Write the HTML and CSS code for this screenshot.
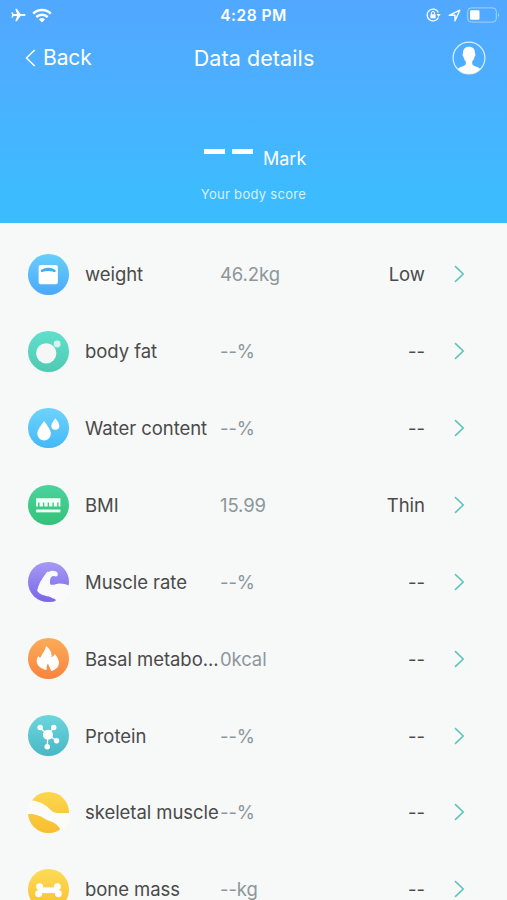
FILE: index.html
```html
<!DOCTYPE html>
<html lang="en">
<head>
    <meta charset="UTF-8">
    <meta name="viewport" content="width=device-width, initial-scale=1.0">
    <title>Data details</title>
    <link rel="stylesheet" href="styles.css">
</head>
<body>
    <header class="header">
        <div class="status-bar">
            <div class="status-left">
                <svg width="15" height="14" viewBox="0 0 15 14"><path d="M14.6 7c0-.7-.8-1-1.800-1H9.500L5.800.8H4.300L6 6H2.700L1.400 4.300H.4L1.100 7 .4 9.700h1L2.700 8H6L4.300 13.200h1.500L9.500 8h3.300c1 0 1.800-.3 1.800-1z" fill="#fff"/></svg>
                <svg width="20" height="15" viewBox="0 0 20 15" fill="none" stroke="#fff" stroke-width="2.500"><path d="M1.200 5.600a12.500 12.500 0 0 1 17.600 0M4.300 9a8.200 8.200 0 0 1 11.400 0"/><path d="M10 14.400l-3-3a4.300 4.300 0 0 1 6 0z" fill="#fff" stroke="none"/></svg>
            </div>
            <span class="time">4:28 PM</span>
            <div class="status-right">
                <svg width="15" height="14" viewBox="0 0 15 14"><path d="M12.300 4.400A5.900 5.900 0 1 0 12.400 9.400" fill="none" stroke="#fff" stroke-width="1.300"/><path d="M10.600 6h4l-2 3z" fill="#fff"/><rect x="4.400" y="6.200" width="5.200" height="4" rx=".5" fill="#fff"/><path d="M5.500 6.500V5a1.500 1.500 0 0 1 3 0v1.500" fill="none" stroke="#fff"/></svg>
                <svg width="13" height="13" viewBox="0 0 13 13"><path d="M1.200 6.300L11.800 1.200 7 11.800V6.300z" fill="none" stroke="#fff" stroke-width="1.400" stroke-linejoin="round"/></svg>
                <svg class="battery" width="33" height="16" viewBox="0 0 33 16"><rect x=".7" y=".9" width="28.600" height="14.200" rx="3.500" fill="none" stroke="#b9e0ff" stroke-opacity=".75"/><rect x="3" y="3.200" width="9.500" height="9.600" rx="1.200" fill="#fff"/><path d="M31 5.500q1.800 2.500 0 5z" fill="#b9e0ff"/></svg>
            </div>
        </div>
        <div class="nav-bar">
            <div class="back">
                <svg width="11" height="18" viewBox="0 0 11 18"><path d="M9.700 1L1.500 9l8.200 8" fill="none" stroke="#fff" stroke-width="1.500"/></svg>
                <span>Back</span>
            </div>
            <h1 class="title">Data details</h1>
            <svg class="avatar" width="34" height="34" viewBox="0 0 34 34"><circle cx="17" cy="17" r="15.900" fill="none" stroke="#d8f0ff" stroke-width="1.200"/><path d="M17 5.800c-4 0-6.200 2.600-6 6.600-.8.400-.5 2.700.5 3.400.3 2 1.200 3.500 2.300 4.600.2 3-.3 3.800-2.500 4.700-2.300.9-4.300 1.700-5.400 3A15.800 15.800 0 0 0 17 32.800 15.800 15.800 0 0 0 28.100 28.100c-1.100-1.300-3.100-2.100-5.400-3-2.200-.9-2.700-1.700-2.500-4.700 1.100-1.100 2-2.600 2.300-4.600 1-.7 1.300-3 .5-3.400.2-4-2-6.600-6-6.600z" fill="#fff"/></svg>
        </div>
        <div class="score">
            <span class="dash"></span>
            <span class="dash"></span>
            <span class="mark">Mark</span>
        </div>
        <p class="caption">Your body score</p>
    </header>

    <main class="list">
        <div class="row">
            <svg class="icon weight" viewBox="0 0 40 40"><rect x="10.500" y="10.800" width="19" height="19" rx="2" fill="#fff"/><path d="M12.800 17.600v-1.700q7.200-4.600 14.400 0v1.700q-1.500 1-2.600-.2-4.600-1.400-9.200 0-1.100 1.200-2.600.2z" fill="#4fa9e8"/></svg>
            <span class="name">weight</span>
            <span class="value">46.2kg</span>
            <span class="level">Low</span>
            <svg class="arrow" viewBox="0 0 11 18"><path d="M1 1.200L9.200 9 1 16.800"/></svg>
        </div>
        <div class="row">
            <svg class="icon fat" viewBox="0 0 40 40"><circle cx="18" cy="22" r="10" fill="#f5f7f7"/><circle cx="28.800" cy="12.800" r="3.400" fill="#d3f5ed"/></svg>
            <span class="name">body fat</span>
            <span class="value">--%</span>
            <span class="level">--</span>
            <svg class="arrow" viewBox="0 0 11 18"><path d="M1 1.200L9.200 9 1 16.800"/></svg>
        </div>
        <div class="row">
            <svg class="icon water" viewBox="0 0 40 40" fill="#fff"><path d="M15.900 12.800c3 4.500 6.700 8.500 6.700 12.700a6.700 6.700 0 0 1-13.400 0c0-4.200 3.700-8.200 6.700-12.700z"/><path d="M27 10.200c1.800 2.800 4 4.900 4 7.400a4 4 0 0 1-8 0c0-2.500 2.200-4.600 4-7.400z"/></svg>
            <span class="name">Water content</span>
            <span class="value">--%</span>
            <span class="level">--</span>
            <svg class="arrow" viewBox="0 0 11 18"><path d="M1 1.200L9.200 9 1 16.800"/></svg>
        </div>
        <div class="row">
            <svg class="icon bmi" viewBox="0 0 40 40" fill="#f4fff8"><path d="M8 13.200h24v8h-1.800v-4h-1.400v4h-3.300v-4h-1.400v4h-3.300v-4h-1.400v4h-3.300v-4h-1.400v4h-3.300v-4H9.800v4H8z"/><rect x="8" y="24.200" width="24" height="2.800"/></svg>
            <span class="name">BMI</span>
            <span class="value">15.99</span>
            <span class="level">Thin</span>
            <svg class="arrow" viewBox="0 0 11 18"><path d="M1 1.200L9.200 9 1 16.800"/></svg>
        </div>
        <div class="row">
            <svg class="icon muscle" viewBox="0 0 40 40" fill="#fafafc"><path d="M20.500 9.800c1.700-1.300 5-1.500 7.300-.3 1.500.8 2 2.700 1.300 4-.8 1.200-2.200.7-3.600.4-1.300-.1-2.100.5-2.900 1.500-1 1.700-1.200 4.700-.6 6.800 1.700.6 3.600.4 5.200-.3 3.500-1.400 8.500-.8 13.800 1.600v6.500c-2 5-7 9.500-14 10.500.5-1.800.4-2.900-.2-4-2.500-.3-4.300-1.800-6.300-2.400-4.500-1-9-2-11.500-5.800 1-5.700 4.500-11.800 8.500-16.800.8-1.500 2-2.100 3-1.700z"/></svg>
            <span class="name">Muscle rate</span>
            <span class="value">--%</span>
            <span class="level">--</span>
            <svg class="arrow" viewBox="0 0 11 18"><path d="M1 1.200L9.200 9 1 16.800"/></svg>
        </div>
        <div class="row">
            <svg class="icon basal" viewBox="0 0 40 40"><path d="M18 8c3.500 3 5.800 6.300 5.300 11 1.300-.6 2.500-1.700 3.200-3.300 5.500 6.500 6.500 13.500-3.500 17l-3.300-7.500c-1.200 2-1.700 4-1.200 6.300-8.500-1.500-12.300-7.500-8.400-13.800.6 1 1.100 1.500 2.200 1.600C14.400 15.300 16.800 12.500 18 8z" fill="#fff"/></svg>
            <span class="name">Basal metabo...</span>
            <span class="value">0kcal</span>
            <span class="level">--</span>
            <svg class="arrow" viewBox="0 0 11 18"><path d="M1 1.200L9.200 9 1 16.800"/></svg>
        </div>
        <div class="row">
            <svg class="icon protein" viewBox="0 0 40 40" fill="#fff"><path d="M19.500 19.500L12 12.500M19.500 19.500l5.800-7M19.500 19.500l-.5 12M19.500 19.500l9 6" stroke="#fff" stroke-width="1.300"/><circle cx="19.700" cy="19.500" r="5"/><circle cx="12" cy="12.300" r="2.700"/><circle cx="25.400" cy="12.300" r="2.700"/><circle cx="28.200" cy="25.500" r="2.700"/><circle cx="19" cy="31.400" r="2.700"/></svg>
            <span class="name">Protein</span>
            <span class="value">--%</span>
            <span class="level">--</span>
            <svg class="arrow" viewBox="0 0 11 18"><path d="M1 1.200L9.200 9 1 16.800"/></svg>
        </div>
        <div class="row">
            <svg class="icon skeletal" viewBox="0 0 40 40" fill="#fbfbf9"><path d="M3.500 8.200C12 9.500 18 13 22.500 17.700c4.500 4.500 10 2.500 18.500 3.300v8c-2 4-5 7-8.800 8.700-1.500-3.800-4.500-6.200-8-8-6.500-1.700-9-4.800-13.700-6.200-3.500-1.500-7-2-11.500-1.500C-1.500 16 .5 11.500 3.500 8.200z"/></svg>
            <span class="name">skeletal muscle</span>
            <span class="value">--%</span>
            <span class="level">--</span>
            <svg class="arrow" viewBox="0 0 11 18"><path d="M1 1.200L9.200 9 1 16.800"/></svg>
        </div>
        <div class="row">
            <svg class="icon bone" viewBox="0 0 40 40" fill="#fff"><rect x="10" y="18.200" width="20" height="5.600"/><circle cx="11.500" cy="17.500" r="3.400"/><circle cx="10.500" cy="24.500" r="3.400"/><circle cx="29" cy="17.500" r="3.400"/><circle cx="30" cy="24.500" r="3.400"/></svg>
            <span class="name">bone mass</span>
            <span class="value">--kg</span>
            <span class="level">--</span>
            <svg class="arrow" viewBox="0 0 11 18"><path d="M1 1.200L9.200 9 1 16.800"/></svg>
        </div>
    </main>
</body>
</html>
```
FILE: styles.css
```css
*{
    margin: 0;
    padding: 0;
    box-sizing: border-box;
}

body{
    height: 900px;
    overflow: hidden;
    background-color: #f7f8f8;
    font-family: Inter, "Liberation Sans", sans-serif;
}

svg{
    display: block;
    flex-shrink: 0;
}

.header{
    height: 223px;
    background: linear-gradient(#52a8ff 0%, #4daeff 33%, #3cbcff 90%);
    color: #fff;
}

.status-bar{
    height: 30px;
    padding: 0 7px 0 11px;
    display: grid;
    grid-template-columns: 1fr auto 1fr;
    align-items: center;
}

.status-left{
    display: flex;
    align-items: center;
    gap: 6px;
}

.time{
    margin-right: 4px;
    font-size: 15.5px;
    font-weight: 600;
    letter-spacing: 0.5px;
}

.status-right{
    display: flex;
    align-items: center;
    justify-content: flex-end;
    gap: 7px;
}

.battery{
    margin-left: -1px;
}

.nav-bar{
    height: 55px;
    padding: 0 21px 0 25px;
    display: grid;
    grid-template-columns: 1fr auto 1fr;
    align-items: center;
}

.back{
    display: flex;
    align-items: center;
    gap: 7px;
    font-size: 21px;
    letter-spacing: -0.1px;
}

.title{
    margin-right: 3px;
    font-size: 21.5px;
    font-weight: 400;
    letter-spacing: 0.1px;
}

.avatar{
    justify-self: end;
}

.score{
    height: 84px;
    padding: 63px 0 0 204px;
    display: flex;
    gap: 7px;
}

.dash{
    width: 21px;
    height: 5px;
    margin-top: 1px;
    background-color: #fff;
}

.mark{
    margin-left: 3px;
    font-size: 18px;
    line-height: 22px;
}

.caption{
    padding-top: 17px;
    text-align: center;
    font-size: 13px;
    line-height: 16px;
    letter-spacing: 0.3px;
    color: #d5f1ff;
}

.list{
    padding-top: 13px;
}

.row{
    height: 76.87px;
    padding: 0 42px 0 28px;
    display: grid;
    grid-template-columns: 40px 135px 1fr auto 11px;
    align-items: center;
    font-size: 18.5px;
    color: #4a4a4a;
    white-space: nowrap;
}

/* some drawings run over the edge of their circle */
.icon{
    width: 40.5px;
    height: 40.5px;
    border-radius: 50%;
    overflow: visible;
}

.name{
    padding-left: 17px;
    letter-spacing: -0.05px;
}

.value{
    padding-left: 17px;
    letter-spacing: -0.1px;
    color: #8d979a;
}

.level{
    margin-right: 29px;
}

.arrow{
    width: 11px;
    height: 18px;
    fill: none;
    stroke: #5fc4bd;
    stroke-width: 1.6;
}

.weight{
    background: linear-gradient(#66cffb, #4ba8fa);
}

.fat{
    background: linear-gradient(#60dfcd, #4fcbb2);
}

.water{
    background: linear-gradient(#6ed3fb, #43b9f8);
}

.bmi{
    background: linear-gradient(#4bd39d, #35c179);
}

.muscle{
    background: linear-gradient(#a59af5, #7b66e8);
}

.basal{
    background: linear-gradient(#fbac58, #f9843e);
}

.protein{
    background: linear-gradient(#6cd6dc, #49b8c5);
}

.skeletal{
    background: linear-gradient(#fbd74e, #f8bd2f);
}

.bone{
    background: linear-gradient(#fddc55, #f9bf35);
}
```
